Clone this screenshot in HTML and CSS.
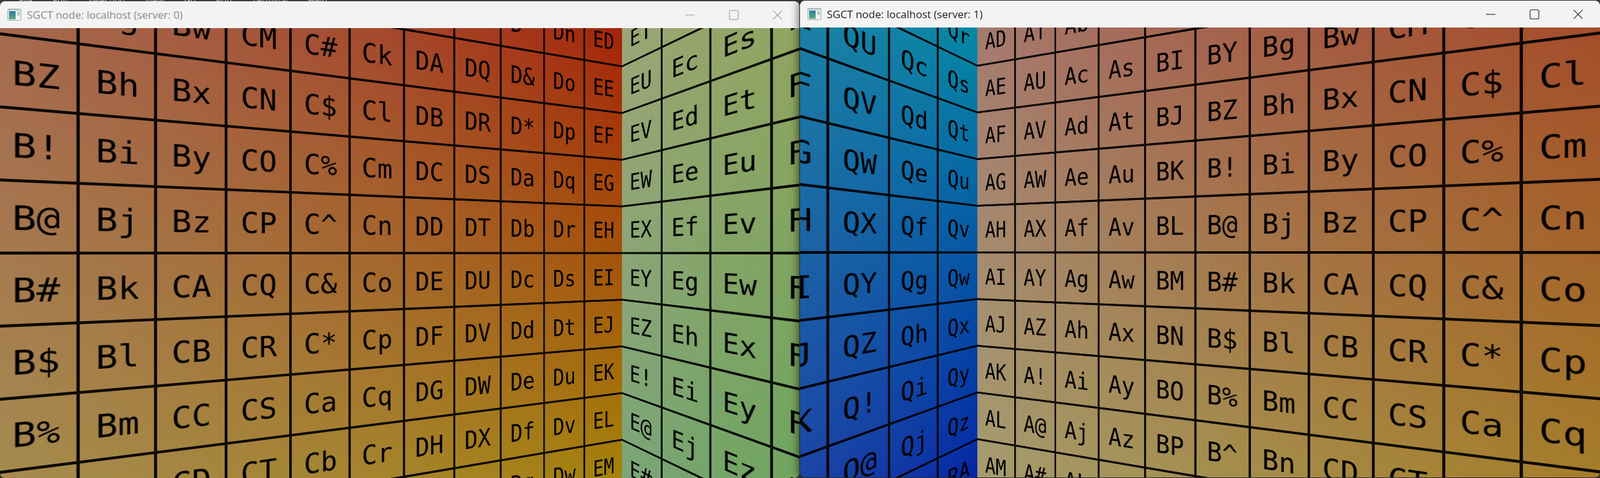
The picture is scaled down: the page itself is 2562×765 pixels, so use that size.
FILE: index.html
```html
<!DOCTYPE html>
<html lang="en">
<head>
<meta charset="utf-8">
<title>SGCT nodes</title>
<link rel="stylesheet" href="styles.css">
</head>
<body>
<div class="desktop">
  <div class="behind"><span>File</span><span>Edit</span><span>Selection</span><span>View</span><span>Go</span><span>Run</span><span>Terminal</span><span>Help</span></div>

  <section class="window window-inactive">
    <header class="titlebar">
      <svg class="app-icon" viewBox="0 0 22 19"><rect x=".5" y=".5" width="21" height="18" rx="1.5" fill="#f2f4f5" stroke="#9aa2a8"/><rect x="1" y="1" width="20" height="2.500" fill="#c9ced2"/><rect x="2.500" y="4" width="10.500" height="13" fill="url(#ga)"/><rect x="16" y="5" width="3.500" height="6" fill="#9ecbb0"/><defs><linearGradient id="ga" x1="0" y1="0" x2="0" y2="1"><stop offset="0" stop-color="#2a78a8"/><stop offset="1" stop-color="#5fae7c"/></linearGradient></defs></svg>
      <span class="title">SGCT node: localhost (server: 0)</span>
      <div class="controls">
        <span class="ctl"><svg viewBox="0 0 16 16"><path d="M.5 8h15"/></svg></span>
        <span class="ctl"><svg viewBox="0 0 16 16"><rect x="1" y=".8" width="14" height="14.4" rx="2"/></svg></span>
        <span class="ctl"><svg viewBox="0 0 16 16"><path d="M.8.8l14.4 14.4M15.200.8L.8 15.200"/></svg></span>
      </div>
    </header>
    <div class="canvas">
      <div class="face face-w0l" data-from="5" data-to="15"></div>
      <div class="face face-w0r" data-from="16" data-to="19"></div>
    </div>
  </section>

  <section class="window window-active">
    <header class="titlebar">
      <svg class="app-icon" viewBox="0 0 22 19"><rect x=".5" y=".5" width="21" height="18" rx="1.5" fill="#f2f4f5" stroke="#9aa2a8"/><rect x="1" y="1" width="20" height="2.500" fill="#c9ced2"/><rect x="2.500" y="4" width="10.500" height="13" fill="url(#gb)"/><rect x="16" y="5" width="3.500" height="6" fill="#9ecbb0"/><defs><linearGradient id="gb" x1="0" y1="0" x2="0" y2="1"><stop offset="0" stop-color="#2a78a8"/><stop offset="1" stop-color="#5fae7c"/></linearGradient></defs></svg>
      <span class="title">SGCT node: localhost (server: 1)</span>
      <div class="controls">
        <span class="ctl"><svg viewBox="0 0 16 16"><path d="M.5 8h15"/></svg></span>
        <span class="ctl"><svg viewBox="0 0 16 16"><rect x="1" y=".8" width="14" height="14.4" rx="2"/></svg></span>
        <span class="ctl"><svg viewBox="0 0 16 16"><path d="M.8.8l14.4 14.4M15.200.8L.8 15.200"/></svg></span>
      </div>
    </header>
    <div class="canvas">
      <div class="face face-w1l" data-from="60" data-to="63"></div>
      <div class="face face-w1r" data-from="0" data-to="10"></div>
    </div>
  </section>
</div>
<script src="grid.js"></script>
</body>
</html>
```

FILE: styles.css
```css
* { box-sizing: border-box; }
html, body { margin: 0; padding: 0; background: #3a3a3a; }

.desktop {
  position: relative;
  width: 2562px;
  height: 765px;
  overflow: hidden;
  background: #3a3a3a;
}

.behind {
  position: absolute;
  left: 30px;
  top: -9px;
  display: flex;
  gap: 32px;
  font: 14px "Open Sans", sans-serif;
  color: #bbb;
}

.window {
  position: absolute;
  display: flex;
  flex-direction: column;
  height: 763px;
  border-radius: 8px;
  overflow: hidden;
}
.window-inactive { left: 0; top: 2px; width: 1280px; }
.window-active {
  left: 1281px;
  top: 1px;
  width: 1281px;
  box-shadow: -2px 0 14px rgba(0, 0, 0, .6);
  overflow: visible;
}
.window-active .titlebar { border-radius: 8px 8px 0 0; }
.window-active .canvas { border-radius: 0 0 8px 8px; }

.titlebar {
  flex: 0 0 43px;
  display: flex;
  align-items: center;
  background: #f3f3f3;
  padding-left: 12px;
}
.app-icon { width: 22px; height: 19px; flex: none; margin-right: 9px; }
.title { font: 17px/1 "Open Sans", sans-serif; white-space: nowrap; }
.window-inactive .title { color: #8c8c8c; }
.window-active .title { color: #1a1a1a; }

.controls { margin-left: auto; display: flex; }
.ctl { width: 70px; display: flex; justify-content: center; align-items: center; }
.ctl svg { width: 16px; height: 16px; fill: none; stroke-width: 1.1; }
.window-inactive .ctl svg { stroke: #9a9a9a; }
.window-active .ctl svg { stroke: #1a1a1a; }

.canvas {
  position: relative;
  flex: 1;
  overflow: hidden;
  background: #000;
}

/* Each face is one wall of the room; a grid in plane units (100 per cell)
   pushed through the wall's homography. */
.face {
  position: absolute;
  left: 0;
  top: 0;
  height: 1600px;
  overflow: hidden;
  transform-origin: 0 0;
  display: grid;
  grid-auto-flow: column;
  grid-template-rows: repeat(10, 96.2px);
  gap: 3.8px;
  padding-top: 301.9px;
  background: linear-gradient(var(--rt), var(--rb));
}
.face::before {
  content: "";
  position: absolute;
  inset: 0;
  background: linear-gradient(var(--lt), var(--lb));
  -webkit-mask-image: linear-gradient(to left, transparent, #000);
  mask-image: linear-gradient(to left, transparent, #000);
}

.face-w0l {
  width: 1100px;
  padding-left: 1.9px;
  grid-template-columns: repeat(10, 96.2px) 98.1px;
  transform: matrix3d(1.9406, .25366, 0, .0007046, 0, 1.589, 0, 0, 0, 0, 1, 0, -986.4, -911.2, 0, 1) translateX(500px);
  --lt: rgb(165, 79, 80); --lb: rgb(165, 165, 80);
  --rt: rgb(165, 5, 10);  --rb: rgb(165, 162, 10);
}
.face-w0r {
  width: 400px;
  grid-template-columns: 98.1px repeat(3, 96.2px);
  transform: matrix3d(-.34763, -.3339, 0, -.0009275, 0, .747, 0, 0, 0, 0, 1, 0, 996, -237.6, 0, 1);
  --lt: rgb(167, 165, 120); --lb: rgb(113, 165, 120);
  --rt: rgb(166, 165, 92);  --rb: rgb(86, 165, 92);
}
.face-w1l {
  width: 400px;
  padding-left: 1.9px;
  grid-template-columns: repeat(3, 96.2px) 98.1px;
  transform: matrix3d(1.33477, .53084, 0, .00147456, 0, 1.1876, 0, 0, 0, 0, 1, 0, -82.4, -590.1, 0, 1);
  --lt: rgb(32, 169, 165); --lb: rgb(32, 32, 165);
  --rt: rgb(5, 170, 165);  --rb: rgb(5, 5, 165);
}
.face-w1r {
  width: 1100px;
  grid-template-columns: 98.1px repeat(10, 96.2px);
  transform: matrix3d(.48825, -.11923, 0, -.0003312, 0, .747, 0, 0, 0, 0, 1, 0, 284.15, -237.6, 0, 1);
  --lt: rgb(165, 113, 113); --lb: rgb(165, 167, 113);
  --rt: rgb(165, 39, 42);   --rb: rgb(165, 164, 42);
}

.cell {
  position: relative;
  display: flex;
  align-items: center;
  justify-content: center;
  padding-top: 4px;
  font: 47px/1 "DejaVu Sans Mono", monospace;
  color: #000;
  white-space: nowrap;
  box-shadow: 0 0 0 1.9px #000;
}
```

FILE: grid.js
```js
// Labels count through the 60-character alphabet, 16 rows to a column.
// Only rows 3 to 12 of each column ever reach the window.
var ALPHABET = 'ABCDEFGHIJKLMNOPQRSTUVWXYZ!@#$%^&*abcdefghijklmnopqrstuvwxyz';

document.querySelectorAll('.face').forEach(function (face) {
  var from = +face.dataset.from, to = +face.dataset.to;
  for (var col = from; col <= to; col++) {
    for (var row = 3; row <= 12; row++) {
      var i = col * 16 + row;
      var cell = document.createElement('span');
      cell.className = 'cell';
      cell.textContent = ALPHABET[Math.floor(i / 60)] + ALPHABET[i % 60];
      face.appendChild(cell);
    }
  }
});
```
